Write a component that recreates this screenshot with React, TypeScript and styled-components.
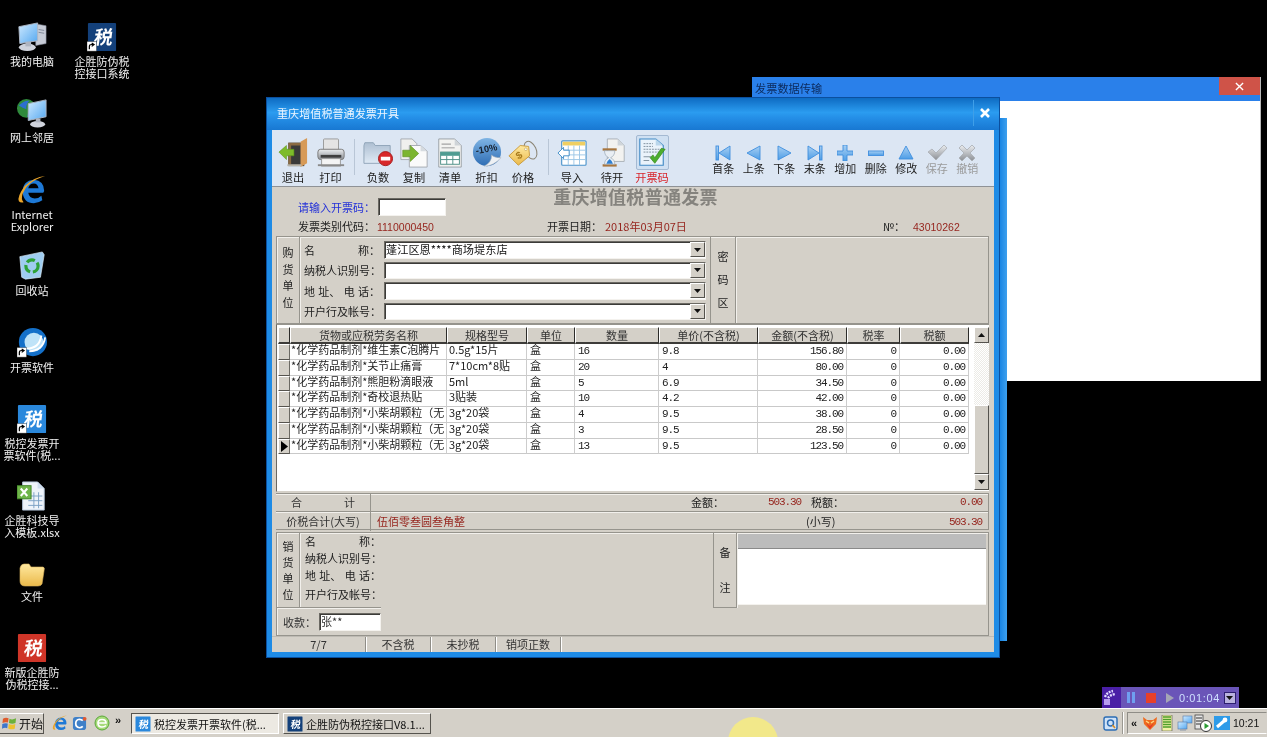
import React from "react";
import styled, { createGlobalStyle, css } from "styled-components";

const CJK = `"Noto Sans CJK SC", "Liberation Sans", sans-serif`;
const GlobalStyle = createGlobalStyle`
  html, body { margin: 0; padding: 0; background: #000; }
  body { font-family: ${CJK}; font-size: 11px; }
`;

const raised = css`
  border: 1px solid;
  border-color: #fff #55534e #55534e #fff;
  background: #d4d0c8;
  box-sizing: border-box;
`;
const sunken = css`
  border: 1px solid;
  border-color: #6b6963 #f4f2ee #f4f2ee #6b6963;
  box-shadow: inset 1px 1px 0 #3c3b38;
  background: #fff;
  box-sizing: border-box;
`;
const etched = css`
  border: 1px solid #96948d;
  box-shadow: inset 1px 1px 0 #f2f0ec;
  box-sizing: border-box;
`;

const Desktop = styled.div`
  width: 1267px;
  height: 737px;
  display: flex;
  flex-direction: column;
  background: #000;
  overflow: hidden;
  position: relative;
  filter: blur(0.3px);
`;
const Canvas = styled.div`
  position: relative;
  flex: 1;
`;
const IconItem = styled.div<{ $x: number; $y: number }>`
  position: absolute;
  left: ${(p) => p.$x}px;
  top: ${(p) => p.$y}px;
  width: 74px;
  display: flex;
  flex-direction: column;
  align-items: center;
  gap: 3px;
  color: #f2f2f2;
  text-align: center;
  line-height: 12px;
  font-size: 11px;
`;
const IconLabel = styled.div`
  white-space: pre-line;
`;

const BackWindow = styled.div`
  position: absolute;
  left: 752px;
  top: 77px;
  width: 509px;
  height: 304px;
  display: flex;
  flex-direction: column;
  background: #fff;
  border-right: 1px solid #b9b9b9;
  box-sizing: border-box;
`;
const BackTitle = styled.div`
  height: 24px;
  flex: none;
  background: #2a80ea;
  color: #0c2a5c;
  display: flex;
  justify-content: space-between;
  padding-left: 3px;
  line-height: 22px;
  font-size: 11.2px;
`;
const BackClose = styled.div`
  width: 41px;
  height: 18px;
  background: #cf5348;
  color: #fff;
  display: flex;
  align-items: center;
  justify-content: center;
`;
const BackStrip = styled.div`
  position: absolute;
  left: 990px;
  top: 118px;
  width: 17px;
  height: 523px;
  background: linear-gradient(90deg, #1a86e4 60%, #3da0ee);
`;

const MainWindow = styled.div`
  position: absolute;
  left: 266px;
  top: 97px;
  width: 734px;
  height: 561px;
  box-sizing: border-box;
  border: 1px solid #0b4f9e;
  padding: 0 5px 5px;
  background: #1e8be6;
  display: flex;
  flex-direction: column;
`;
const TitleBar = styled.div`
  height: 32px;
  flex: none;
  box-sizing: border-box;
  margin: 0 -5px;
  padding: 0 0 2px 10px;
  display: flex;
  align-items: center;
  justify-content: space-between;
  color: #eef6ff;
  font-size: 11.1px;
  background: linear-gradient(180deg, #0e6bc2 0%, #2b9cf0 45%, #2590e8 60%, #1878d2 100%);
`;
const CloseBox = styled.div`
  width: 26px;
  height: 26px;
  box-sizing: border-box;
  padding-right: 4px;
  display: flex;
  align-items: center;
  justify-content: center;
  border-left: 1px solid #3f9fe8;
`;
const Toolbar = styled.div`
  height: 57px;
  flex: none;
  box-sizing: border-box;
  background: #dce6f3;
  border-bottom: 1px solid #8f9296;
  display: flex;
  padding-left: 2px;
`;
const ToolGroup = styled.div<{ $ml?: number; $gap?: number }>`
  display: flex;
  margin-left: ${(p) => p.$ml ?? 0}px;
  gap: ${(p) => p.$gap ?? 0}px;
`;
const ToolSep = styled.div<{ $ml: number }>`
  width: 1px;
  height: 36px;
  margin: 9px 0 0 ${(p) => p.$ml}px;
  background: #b9c6d6;
`;
const ToolButton = styled.div<{ $w: number; $red?: boolean }>`
  width: ${(p) => p.$w}px;
  padding-top: 5px;
  display: flex;
  flex-direction: column;
  align-items: center;
  color: ${(p) => (p.$red ? "#d8262c" : "#222")};
  line-height: 14px;
  font-size: 11.2px;
`;
const ToolIcon = styled.div<{ $active?: boolean }>`
  width: 33px;
  height: 35px;
  box-sizing: border-box;
  display: flex;
  align-items: center;
  justify-content: center;
  border-radius: 2px;
  ${(p) => p.$active && "background:#cfe0f2;border:1px solid #a4b9d2;"}
`;
const NavButton = styled.div<{ $off?: boolean }>`
  width: 30.5px;
  padding-top: 15px;
  display: flex;
  flex-direction: column;
  align-items: center;
  gap: 1px;
  line-height: 13px;
  font-size: 11px;
  color: ${(p) => (p.$off ? "#9a9a9a" : "#222")};
`;
const NavSlot = styled.div`
  height: 16px;
  display: flex;
  align-items: center;
  justify-content: center;
`;

const Body = styled.div`
  flex: 1;
  background: #d4d0c8;
  padding: 0 5px 0 4px;
  display: flex;
  flex-direction: column;
  color: #222;
`;
const HeaderArea = styled.div`
  height: 49px;
  flex: none;
  display: grid;
  grid-template-rows: 31px 18px;
  padding-left: 22px;
  position: relative;
`;
const Heading = styled.div`
  grid-area: 1 / 1;
  justify-self: center;
  margin: 0 0 0 -16px;
  font: 700 18px/18px "Noto Sans CJK SC", serif;
  color: #85837e;
  letter-spacing: 0.3px;
`;
const CodeRow = styled.div`
  grid-area: 1 / 1;
  display: flex;
  align-items: flex-start;
  padding-top: 11px;
  z-index: 1;
`;
const BlueLabel = styled.span`
  color: #2330d8;
  width: 80px;
  line-height: 18px;
`;
const CodeInput = styled.div`
  ${sunken}
  width: 68px;
  height: 18px;
`;
const MetaRow = styled.div`
  grid-area: 2 / 1;
  display: grid;
  grid-template-columns: 249px 336px 1fr;
  line-height: 16px;
`;
const RedText = styled.span`
  color: #96261f;
`;
const Digits = styled.span<{ $red?: boolean }>`
  font-family: "Liberation Mono", monospace;
  font-size: 11px;
  letter-spacing: -1.1px;
  color: ${(p) => (p.$red ? "#96261f" : "#222")};
`;
const PlainDigits = styled(RedText)`
  font-family: "Liberation Sans", sans-serif;
  font-size: 10.5px;
`;
const MetaLabel = styled.span<{ $w?: number }>`
  display: inline-block;
  width: ${(p) => (p.$w ? `${p.$w}px` : "auto")};
`;

const BuyerPanel = styled.div`
  ${etched}
  height: 88px;
  flex: none;
  display: grid;
  grid-template-columns: 23px 1fr 25px 252px;
`;
const SideText = styled.div<{ $gap?: number; $pb?: number }>`
  display: flex;
  flex-direction: column;
  align-items: center;
  justify-content: center;
  gap: ${(p) => p.$gap ?? 5.5}px;
  padding-bottom: ${(p) => p.$pb ?? 0}px;
  line-height: 11px;
  border-right: 1px solid #96948d;
  box-shadow: 1px 0 0 #f2f0ec;
  box-sizing: border-box;
`;
const SellerSide = styled(SideText)`
  width: 23px;
  flex: none;
`;
const FieldList = styled.div`
  padding: 4px 4px 0 4px;
  display: flex;
  flex-direction: column;
  gap: 3px;
  border-right: 1px solid #96948d;
`;
const FieldRow = styled.div`
  display: flex;
  height: 17.5px;
  align-items: center;
`;
const FieldLabel = styled.div`
  width: 80px;
  flex: none;
  padding-right: 4px;
  display: flex;
  justify-content: space-between;
  box-sizing: border-box;
  white-space: nowrap;
`;
const FieldInput = styled.div`
  ${sunken}
  flex: 1;
  height: 100%;
  display: flex;
  align-items: center;
  color: #111;
  line-height: 12px;
  padding: 0 0 0 1px;
  font-size: 11.2px;
`;
const FieldValue = styled.span`
  margin-top: -2px;
`;
const DropButton = styled.div`
  ${raised}
  width: 15px;
  height: 15px;
  flex: none;
  margin-left: auto;
  display: flex;
  align-items: center;
  justify-content: center;
`;

const TablePanel = styled.div`
  height: 168px;
  flex: none;
  box-sizing: border-box;
  display: flex;
  background: #fff;
  padding: 2px 1px 1px 1px;
  border-top: 1px solid #96948d;
  border-left: 1px solid #6b6963;
  border-bottom: 1px solid #d4d0c8;
`;
const GridArea = styled.div`
  width: 692px;
  flex: none;
  box-sizing: border-box;
`;
const COLS = "12px 157px 80px 48px 84px 99px 89px 53px 69px";
const HeadRow = styled.div`
  display: grid;
  grid-template-columns: ${COLS};
  height: 17px;
`;
const HeadCell = styled.div`
  ${raised}
  border-right-color: #2d2c2a;
  border-bottom: 2px solid #3d3c39;
  display: flex;
  align-items: center;
  justify-content: center;
  line-height: 12px;
  color: #333;
  font-size: 11px;
`;
const DataRow = styled.div`
  display: grid;
  grid-template-columns: ${COLS};
  height: 15.75px;
`;
const Indicator = styled.div`
  ${raised}
  border-right-color: #6b6963;
  display: flex;
  align-items: center;
  justify-content: center;
`;
const Cell = styled.div<{ $right?: boolean; $pad?: number }>`
  box-sizing: border-box;
  border-right: 1px solid #cdcdcd;
  border-bottom: 1px solid #c9c9c9;
  white-space: nowrap;
  line-height: 11.5px;
  color: #222;
  text-align: ${(p) => (p.$right ? "right" : "left")};
  padding: 0 ${(p) => (p.$right ? p.$pad ?? 3 : 0)}px 0 ${(p) => (p.$right ? 0 : p.$pad ?? 3)}px;
`;
const Scroll = styled.div`
  width: 15px;
  margin-left: 4px;
  flex: none;
  display: flex;
  flex-direction: column;
  background: repeating-conic-gradient(#fff 0 25%, #ecebe6 0 50%) 0 0 / 2px 2px;
`;
const ScrollBtn = styled.div`
  ${raised}
  height: 16px;
  flex: none;
  display: flex;
  align-items: center;
  justify-content: center;
`;
const ScrollGap = styled.div`
  height: 62px;
  flex: none;
`;
const ScrollThumb = styled.div`
  ${raised}
  flex: 1;
`;

const TotalsPanel = styled.div`
  margin-top: 1px;
  height: 37px;
  flex: none;
  box-sizing: border-box;
  display: flex;
  flex-direction: column;
  border-top: 1px solid #96948d;
  border-bottom: 1px solid #96948d;
  border-right: 1px solid #96948d;
`;
const TotalRow = styled.div<{ $first?: boolean }>`
  flex: 1;
  display: grid;
  grid-template-columns: 95px 320px 77px 43px 1fr;
  align-items: center;
  line-height: 17px;
  ${(p) => p.$first && "border-bottom: 1px solid #96948d;"}
  box-shadow: inset 0 1px 0 #f2f0ec;
`;
const TotalRowWide = styled(TotalRow)`
  grid-template-columns: 95px 435px 1fr auto;
`;
const TotalHead = styled.div<{ $center?: boolean }>`
  height: 100%;
  box-sizing: border-box;
  border-right: 1px solid #96948d;
  display: flex;
  align-items: center;
  justify-content: ${(p) => (p.$center ? "center" : "space-between")};
  padding: ${(p) => (p.$center ? "0" : "0 15px 0 15px")};
  color: #333;
`;
const TotalEnd = styled.div`
  text-align: right;
  padding-right: 6px;
`;
const TaxLine = styled.div`
  display: flex;
  justify-content: space-between;
`;
const TotalText = styled.div<{ $pl?: number }>`
  padding-left: ${(p) => p.$pl ?? 0}px;
`;

const SellerPanel = styled.div`
  ${etched}
  margin-top: 2px;
  height: 104px;
  flex: none;
  display: flex;
  flex-direction: column;
`;
const SellerTop = styled.div`
  height: 75px;
  flex: none;
  display: flex;
`;
const SellerBlock = styled.div`
  width: 104px;
  flex: none;
  display: flex;
  border-bottom: 1px solid #96948d;
  box-shadow: 0 1px 0 #f2f0ec;
`;
const SellerFields = styled.div`
  padding: 0 0 0 5px;
  display: flex;
  flex-direction: column;
  flex: 1;
`;
const SellerRow = styled.div<{ $mt?: number }>`
  width: 76px;
  height: 17px;
  margin-top: ${(p) => p.$mt ?? 0}px;
  line-height: 17px;
  display: flex;
  justify-content: space-between;
  white-space: nowrap;
`;
const SellerGap = styled.div`
  flex: 1;
`;
const RemarkSide = styled(SideText)`
  width: 24px;
  flex: none;
  border-left: 1px solid #96948d;
  border-bottom: 1px solid #96948d;
`;
const RemarkBox = styled.div`
  width: 248px;
  flex: none;
  margin: 1px 2px 3px 1px;
  display: flex;
  flex-direction: column;
`;
const RemarkHead = styled.div`
  height: 14px;
  flex: none;
  background: #bcbcbc;
  border-bottom: 1px solid #8a8a8a;
`;
const RemarkArea = styled.div`
  flex: 1;
  background: #fff;
  border-bottom: 1px solid #f4f2ee;
`;
const PayeeRow = styled.div`
  flex: 1;
  display: flex;
  align-items: center;
  padding: 1px 0 0 6px;
  color: #333;
`;
const PayeeInput = styled.div`
  ${sunken}
  width: 62px;
  height: 18px;
  margin-left: 3px;
  line-height: 14px;
  padding-left: 1px;
`;

const StatusBar = styled.div`
  height: 15px;
  flex: none;
  background: #d4d0c8;
  display: flex;
  line-height: 14px;
  color: #333;
  border-top: 1px solid #bdbab3;
`;
const StatusCell = styled.div<{ $w: number }>`
  width: ${(p) => p.$w}px;
  flex: none;
  box-sizing: border-box;
  text-align: center;
  border-right: 1px solid #8f8d87;
  box-shadow: 1px 0 0 #fff;
`;

const RecorderBar = styled.div`
  position: absolute;
  left: 1102px;
  top: 687px;
  width: 137px;
  height: 21px;
  background: #6a55b8;
  display: flex;
  align-items: center;
  color: #cfe0ff;
  font-size: 11px;
`;
const RecorderLogo = styled.div`
  width: 19px;
  height: 100%;
  flex: none;
  background: #4a1fa6;
  display: flex;
  align-items: center;
  justify-content: center;
`;
const RecorderControls = styled.div`
  display: flex;
  align-items: center;
  gap: 9px;
  margin-left: 5px;
`;
const RecorderTime = styled.span`
  margin-left: 4px;
  font-family: "Liberation Sans", sans-serif;
  letter-spacing: 0.6px;
`;
const RecorderMenu = styled.div`
  width: 12px;
  height: 12px;
  margin-left: 4px;
  background: #b9b2de;
  border: 1px solid #2d1f70;
  box-sizing: border-box;
  display: flex;
  align-items: center;
  justify-content: center;
`;
const CursorGlow = styled.div`
  position: absolute;
  left: 728px;
  top: 717px;
  width: 50px;
  height: 50px;
  border-radius: 50%;
  background: #f2e88a;
  z-index: 2;
`;

const Taskbar = styled.div`
  height: 29px;
  flex: none;
  box-sizing: border-box;
  background: #d4d0c8;
  border-top: 1px solid #fff;
  display: flex;
  align-items: center;
  color: #111;
`;
const StartButton = styled.div`
  ${raised}
  width: 44px;
  height: 21px;
  margin-top: 1px;
  display: flex;
  align-items: center;
  gap: 2px;
  padding-left: 2px;
  font-size: 12px;
  border-left: none;
`;
const QuickLaunch = styled.div`
  display: flex;
  align-items: center;
  margin-left: 8px;
  width: 79px;
`;
const QuickIcon = styled.div<{ $w: number }>`
  width: ${(p) => p.$w}px;
  display: flex;
`;
const Chevrons = styled.span`
  font: 700 11px/12px "Liberation Sans", sans-serif;
  margin: -6px 0 0 0;
`;
const TaskButton = styled.div<{ $on?: boolean }>`
  ${raised}
  width: 148px;
  height: 21px;
  margin: 1px 4px 0 0;
  display: flex;
  align-items: center;
  gap: 3px;
  padding-left: 3px;
  white-space: nowrap;
  font-size: 11px;
  ${(p) =>
    p.$on &&
    css`
      border-color: #55534e #fff #fff #55534e;
      background: #ece9e2;
    `}
`;
const TaskSpacer = styled.div`
  flex: 1;
`;
const TrayOuter = styled.div`
  display: flex;
  align-items: center;
`;
const TrayDivider = styled.div`
  width: 1px;
  height: 22px;
  margin-left: 3px;
  background: #9a9891;
  box-shadow: 1px 0 0 #fff;
`;
const Tray = styled.div`
  width: 140px;
  height: 22px;
  box-sizing: border-box;
  margin-left: 4px;
  border: 1px solid;
  border-color: #8f8d87 transparent #fff #8f8d87;
  display: flex;
  align-items: center;
  padding-left: 3px;
  gap: 1.5px;
`;
const TrayChev = styled(Chevrons)`
  margin: 0;
  width: 9px;
`;
const Clock = styled.span`
  margin-left: 2px;
  font-family: "Liberation Sans", sans-serif;
  font-size: 10.5px;
`;

/* ---------- drawings ---------- */
type SP = { s?: number };
const Svg: React.FC<{ s?: number; v?: number; children: React.ReactNode }> = ({ s = 30, v = 32, children }) => (
  <svg width={s} height={s} viewBox={`0 0 ${v} ${v}`} style={{ display: "block", flex: "none" }}>
    {children}
  </svg>
);
const Defs = () => (
  <svg width="0" height="0" style={{ position: "absolute" }}>
    <defs>
      <linearGradient id="nav" x1="0" y1="0" x2="0" y2="1">
        <stop offset="0" stopColor="#a9d0f3" />
        <stop offset="1" stopColor="#4d9de6" />
      </linearGradient>
      <linearGradient id="gray" x1="0" y1="0" x2="0" y2="1">
        <stop offset="0" stopColor="#eceef0" />
        <stop offset="1" stopColor="#8b8f95" />
      </linearGradient>
      <linearGradient id="folder" x1="0" y1="0" x2="0" y2="1">
        <stop offset="0" stopColor="#aebfd2" />
        <stop offset="1" stopColor="#dfeaf5" />
      </linearGradient>
      <linearGradient id="sky" x1="0" y1="0" x2="0" y2="1">
        <stop offset="0" stopColor="#7fb4e4" />
        <stop offset="1" stopColor="#2e6db4" />
      </linearGradient>
      <linearGradient id="screen" x1="0" y1="0" x2="1" y2="1">
        <stop offset="0" stopColor="#cfeaff" />
        <stop offset="1" stopColor="#55a8f0" />
      </linearGradient>
      <linearGradient id="yellow" x1="0" y1="0" x2="0" y2="1">
        <stop offset="0" stopColor="#ffe9a0" />
        <stop offset="1" stopColor="#eab94a" />
      </linearGradient>
    </defs>
  </svg>
);

const ExitIcon = () => (
  <Svg>
    <rect x="11" y="5" width="17" height="25" fill="#3a3a3a" />
    <polygon points="11,5 24,5 24,8 14,8 14,28 11,28" fill="#8a6a42" />
    <polygon points="24,4 31,0 31,27 24,31" fill="#d79a57" />
    <rect x="10" y="28" width="15" height="2" fill="#b9b4a8" />
    <polygon points="1,15 9,8 9,12 17,12 17,19 9,19 9,23" fill="#7dbb2a" stroke="#5b9118" strokeWidth=".6" />
  </Svg>
);
const PrintIcon = () => (
  <Svg>
    <rect x="8" y="1" width="16" height="12" rx="1" fill="#e4e4e4" stroke="#999" />
    <rect x="2" y="12" width="28" height="11" rx="3" fill="url(#gray)" stroke="#777" />
    <rect x="5" y="18" width="22" height="3" fill="#3f3f3f" />
    <rect x="6" y="22" width="20" height="8" fill="#f4f4f4" stroke="#999" />
    <rect x="2" y="28" width="28" height="2" fill="#8a8a8a" />
  </Svg>
);
const FolderMinusIcon = () => (
  <Svg>
    <path d="M1 8 L2 5 H11 L13 8 H29 V27 H1Z" fill="url(#folder)" stroke="#8fa3b8" />
    <circle cx="24" cy="22" r="7.5" fill="#d8282a" stroke="#a51a1a" />
    <rect x="19" y="20" width="10" height="4" fill="#fff" />
  </Svg>
);
const CopyIcon = () => (
  <Svg>
    <path d="M2 1 H14 L19 6 V23 H2Z" fill="#f0f0ee" stroke="#a5aab0" />
    <path d="M11 8 H23 L30 14 V31 H11Z" fill="#fafafa" stroke="#a5aab0" />
    <polygon points="23,8 23,14 30,14" fill="#d6dbe0" />
    <polygon points="4,13 12,13 12,8 21,16.5 12,25 12,20 4,20" fill="#7cb52f" stroke="#568a16" strokeWidth=".6" />
  </Svg>
);
const ListIcon = () => (
  <Svg>
    <path d="M4 1 H21 L28 8 V31 H4Z" fill="#f2f2f0" stroke="#9aa0a6" />
    <polygon points="21,1 21,8 28,8" fill="#cfd4d8" />
    <rect x="7" y="6" width="10" height="1" fill="#888" />
    <rect x="7" y="10" width="14" height="1" fill="#999" />
    <rect x="6" y="15" width="20" height="13" fill="#fff" stroke="#4d8f86" />
    <rect x="6" y="15" width="20" height="4" fill="#4f9c92" />
    <path d="M6 23 H26 M12.5 19 V28 M19 19 V28" stroke="#4d8f86" strokeWidth="1" />
  </Svg>
);
const DiscountIcon = () => (
  <Svg>
    <circle cx="16" cy="15" r="15" fill="url(#sky)" />
    <path d="M13 30 Q23 30 31 21 Q23 21 21 18 Q21 26 13 30Z" fill="#eef1f4" stroke="#a9b2bb" strokeWidth=".6" />
    <text x="16" y="15" textAnchor="middle" fontSize="10" fontWeight="700" fill="#17202c" fontFamily="Liberation Sans" transform="rotate(-10 16 15)">
      -10%
    </text>
  </Svg>
);
const TagIcon = () => (
  <Svg>
    <ellipse cx="24" cy="13" rx="6" ry="10" fill="none" stroke="#8b8575" strokeWidth="1.1" transform="rotate(-25 24 13)" />
    <polygon points="1,19 13,8 22,9 23,19 11,29" fill="url(#yellow)" stroke="#c79a3e" />
    <circle cx="19" cy="12" r="1.4" fill="#fff" stroke="#a8852e" strokeWidth=".5" />
    <text x="12" y="22" textAnchor="middle" fontSize="11" fontWeight="700" fill="#a87b1d" fontFamily="Liberation Sans" transform="rotate(-30 12 19)">
      $
    </text>
  </Svg>
);
const ImportIcon = () => (
  <Svg>
    <rect x="5" y="3" width="26" height="26" rx="1" fill="#fff" stroke="#4a93cb" strokeWidth="1.2" />
    <rect x="6" y="4" width="24" height="4" fill="#efcf62" />
    <path d="M6 13 H30 M6 18 H30 M6 23 H30 M12 8 V29 M18 8 V29 M24 8 V29" stroke="#9cc6e6" strokeWidth="1" />
    <polygon points="1,16 7,10 7,13 13,13 13,19 7,19 7,22" fill="#fff" stroke="#3d8cc8" />
  </Svg>
);
const PendingIcon = () => (
  <Svg>
    <path d="M11 1 H22 L29 8 V25 H11Z" fill="#f2f2f0" stroke="#aab0b6" />
    <polygon points="22,1 22,8 29,8" fill="#cfd5da" />
    <rect x="6" y="11" width="15" height="2.5" fill="#a8763e" />
    <rect x="6" y="28" width="15" height="2.5" fill="#a8763e" />
    <path d="M8 13.5 H19 Q19 19 14.5 21 Q19 23 19 28 H8 Q8 23 12.5 21 Q8 19 8 13.5Z" fill="#e9eef3" stroke="#8a9aa8" strokeWidth=".6" />
    <path d="M10 27.5 H17 Q16 24 13.5 22.5 Q11 24 10 27.5Z" fill="#2f7fd1" />
  </Svg>
);
const CodeIcon = () => (
  <Svg>
    <path d="M3 1 H20 L28 8 V29 H3Z" fill="#eaf3fb" stroke="#3f88c4" strokeWidth="1.2" />
    <polygon points="20,1 20,8 28,8" fill="#b9d6ec" />
    <path d="M7 6 H17 M7 9 H17 M7 12 H24 M7 15 H24" stroke="#7d8e9c" strokeWidth="1" strokeDasharray="2 1" />
    <path d="M7 20 H15 M7 24 H13" stroke="#7d8e9c" strokeWidth="1" />
    <path d="M14 21 L19 27 L30 12 L26 11 L19 21 L17 18Z" fill="#4cae2e" stroke="#2f8419" strokeWidth=".7" />
  </Svg>
);

const navProps = { fill: "url(#nav)", stroke: "#3f8ede", strokeWidth: 0.9 };
const NavFirst = () => (
  <Svg s={16} v={16}>
    <rect x="1" y="1" width="2.5" height="14" {...navProps} />
    <polygon points="15,1 15,15 4,8" {...navProps} />
  </Svg>
);
const NavPrev = () => (
  <Svg s={16} v={16}>
    <polygon points="14,1 14,15 1,8" {...navProps} />
  </Svg>
);
const NavNext = () => (
  <Svg s={16} v={16}>
    <polygon points="2,1 2,15 15,8" {...navProps} />
  </Svg>
);
const NavLast = () => (
  <Svg s={16} v={16}>
    <polygon points="1,1 1,15 12,8" {...navProps} />
    <rect x="12.5" y="1" width="2.5" height="14" {...navProps} />
  </Svg>
);
const NavPlus = () => (
  <Svg s={16} v={16}>
    <polygon points="6,0 10,0 10,6 16,6 16,10 10,10 10,16 6,16 6,10 0,10 0,6 6,6" {...navProps} />
  </Svg>
);
const NavMinus = () => (
  <Svg s={16} v={16}>
    <rect x="0.5" y="6" width="15" height="4.5" {...navProps} />
  </Svg>
);
const NavEdit = () => (
  <Svg s={16} v={16}>
    <polygon points="8,1 15,14 1,14" {...navProps} />
  </Svg>
);
const grayProps = { fill: "url(#gray)", stroke: "#a9adb2", strokeWidth: 0.8 };
const NavSave = () => (
  <Svg s={20} v={20}>
    <polygon points="1,9 5,6 9,10 17,2 20,5 9,17" {...grayProps} />
  </Svg>
);
const NavCancel = () => (
  <Svg s={18} v={18}>
    <polygon points="4,1 9,6 14,1 17,4 12,9 17,14 14,17 9,12 4,17 1,14 6,9 1,4" {...grayProps} />
  </Svg>
);
const Arrow: React.FC<{ up?: boolean }> = ({ up }) => (
  <svg width="7" height="4" viewBox="0 0 7 4" style={{ display: "block" }}>
    <polygon points={up ? "0,4 7,4 3.5,0" : "0,0 7,0 3.5,4"} fill="#111" />
  </svg>
);
const RowPointer = () => (
  <svg width="7" height="11" viewBox="0 0 7 11" style={{ display: "block" }}>
    <polygon points="0,0 7,5.5 0,11" fill="#000" />
  </svg>
);
const CloseX: React.FC<{ size: number; w: number }> = ({ size, w }) => (
  <svg width={size} height={size} viewBox="0 0 10 10" style={{ display: "block" }}>
    <path d="M1 1 L9 9 M9 1 L1 9" stroke="#fff" strokeWidth={w} />
  </svg>
);

const Shortcut = () => (
  <g>
    <rect x="0" y="21" width="10" height="10" fill="#fff" stroke="#555" strokeWidth=".5" />
    <path d="M2.5 29 V26 Q2.5 24 5 24 H7 M5 22.5 L7.5 24 L5 26" fill="none" stroke="#000" strokeWidth="1.3" />
  </g>
);
const LogoTile: React.FC<{ bg: string; color?: string; arrow?: boolean; s?: number }> = ({ bg, color = "#fff", arrow, s = 30 }) => (
  <Svg s={s}>
    <rect x="1" y="1" width="30" height="30" fill={bg} rx="1" />
    <text x="20" y="24" textAnchor="middle" fontSize="20" fontWeight="700" fill={color} fontFamily="Noto Sans CJK SC" transform="skewX(-8)">
      税
    </text>
    {arrow && <Shortcut />}
  </Svg>
);
const ComputerIcon = () => (
  <Svg>
    <polygon points="20,2 31,4 31,23 20,25" fill="#c6cbd6" stroke="#8c93a3" strokeWidth=".6" />
    <path d="M23 8 L29 9 M23 11 L29 12" stroke="#7e8696" />
    <polygon points="2,5 22,1 22,20 3,23" fill="url(#screen)" stroke="#aeb6c4" />
    <ellipse cx="11" cy="27" rx="9" ry="4" fill="#cfd3dc" />
    <rect x="9" y="21" width="6" height="5" fill="#aeb4c0" />
  </Svg>
);
const NetworkIcon = () => (
  <Svg>
    <circle cx="10" cy="11" r="10" fill="#2f8a3c" />
    <path d="M2 8 Q8 2 13 3 Q9 8 10 12 Q5 10 2 8Z" fill="#2d6fd0" />
    <path d="M12 15 Q18 13 19 17 Q15 21 11 20Z" fill="#2d6fd0" />
    <polygon points="12,6 31,2 31,20 12,24" fill="url(#screen)" stroke="#aeb6c4" />
    <ellipse cx="22" cy="28" rx="8" ry="3.5" fill="#cfd3dc" />
    <rect x="20" y="22" width="5" height="4" fill="#aeb4c0" />
  </Svg>
);
const IEIcon: React.FC<SP> = ({ s = 30 }) => (
  <Svg s={s}>
    <path
      d="M28 19 H12 Q13 25 19 25 Q23 25 26 22 L27 27 Q23 30 18 30 Q7 30 6 18 Q6 6 18 5 Q29 6 29 17Z M12 14 H23 Q22 9 18 9 Q13 9 12 14Z"
      fillRule="evenodd"
      fill="#1e79d6"
    />
    <path d="M2 28 Q0 23 8 12 Q18 2 30 1 Q26 2 20 5 Q10 10 6 20 Q4 26 7 29 Q4 30 2 28Z" fill="#eaa52a" />
  </Svg>
);
const BinIcon = () => (
  <Svg>
    <polygon points="3,6 27,1 29,4 25,28 9,30 5,28" fill="#9fcdf0" stroke="#dff0fc" strokeWidth=".7" />
    <circle cx="16" cy="16" r="6.5" fill="none" stroke="#2da238" strokeWidth="3.4" strokeDasharray="9 3" />
  </Svg>
);
const InvoiceAppIcon = () => (
  <Svg>
    <circle cx="17" cy="15" r="15" fill="#1470c9" />
    <circle cx="18" cy="15" r="10" fill="#bfe3f8" />
    <path d="M10 22 Q24 22 26 8 M13 25 Q28 24 30 10" stroke="#fff" strokeWidth="2" fill="none" />
    <Shortcut />
  </Svg>
);
const ExcelIcon = () => (
  <Svg>
    <path d="M6 1 H22 L29 8 V31 H6Z" fill="#eef3fa" stroke="#b6c8dc" />
    <polygon points="22,1 22,8 29,8" fill="#cfdded" />
    <path d="M12 16 H27 M12 21 H27 M12 26 H27 M18 12 V29 M23 12 V29" stroke="#7aa0c4" />
    <rect x="0" y="5" width="15" height="14" fill="#6fb54a" stroke="#3e8226" />
    <path d="M4 8 L11 16 M11 8 L4 16" stroke="#fff" strokeWidth="2.2" />
  </Svg>
);
const FolderIcon = () => (
  <Svg s={26} v={26}>
    <path d="M1 7 Q2 3 5 3 H10 L12 6 H24 Q26 6 25 10 L23 23 Q22 25 19 25 H6 Q1 25 1 20Z" fill="url(#yellow)" stroke="#d8b25c" strokeWidth=".6" />
  </Svg>
);
const StartFlag = () => (
  <Svg s={15} v={16}>
    <path d="M1 3 Q4 1 7 2.5 L6.4 7 Q3.5 6 0.5 7.5Z" fill="#df5b2c" />
    <path d="M8 3 Q11 4.5 15 2.5 L14.4 7.5 Q11 9 7.4 7.5Z" fill="#6bb13a" />
    <path d="M0.3 8.5 Q3.5 7 6.2 8 L5.6 13 Q3 12 0 13.5Z" fill="#3d77cc" />
    <path d="M7.2 8.6 Q11 10 14.2 8.6 L13.6 13.5 Q10 15 6.6 13.3Z" fill="#edc12f" />
  </Svg>
);
const ToolboxIcon = () => (
  <Svg s={16} v={16}>
    <rect x="1" y="2" width="13" height="13" rx="2" fill="#cfe2f7" stroke="#2b6cb4" strokeWidth="1.4" />
    <circle cx="7.5" cy="8" r="3" fill="none" stroke="#2b6cb4" strokeWidth="1.5" />
    <path d="M9.5 10 L12 13" stroke="#d98a1f" strokeWidth="1.6" />
  </Svg>
);
const FoxIcon = () => (
  <Svg s={16} v={16}>
    <path d="M1 2 L5 5 H11 L15 2 L14 9 L8 15 L2 9Z" fill="#ee6b20" />
    <path d="M4 8 L8 11 L12 8 L8 14Z" fill="#e23a2c" />
    <path d="M4 6 L7 8 M12 6 L9 8" stroke="#ffd880" strokeWidth="1.3" />
  </Svg>
);
const BarsIcon = () => (
  <Svg s={16} v={16}>
    <rect x="3" y="0" width="10" height="16" fill="#f2f2a6" stroke="#333" strokeWidth=".5" />
    <path d="M4 2 H12 M4 4.5 H12 M4 7 H12 M4 9.5 H12 M4 12 H12" stroke="#4e9f2a" strokeWidth="1.6" />
  </Svg>
);
const NetTrayIcon = () => (
  <Svg s={16} v={16}>
    <rect x="6" y="1" width="9" height="7" fill="url(#screen)" stroke="#5177a8" strokeWidth=".6" />
    <rect x="1" y="7" width="9" height="7" fill="url(#screen)" stroke="#5177a8" strokeWidth=".6" />
    <path d="M3 15 H9" stroke="#8a97aa" />
  </Svg>
);
const ServerIcon = () => (
  <Svg s={18} v={18}>
    <rect x="1" y="1" width="8" height="14" fill="#e6e6e6" stroke="#444" strokeWidth=".8" />
    <path d="M2 4 H8 M2 7 H8 M2 10 H8" stroke="#333" />
    <circle cx="12" cy="12" r="5.5" fill="#fff" stroke="#333" />
    <polygon points="10.5,9 15,12 10.5,15" fill="#2a9c33" />
  </Svg>
);
const WrenchIcon = () => (
  <Svg s={16} v={16}>
    <rect x="0" y="1" width="16" height="14" fill="#2e9be8" />
    <path d="M3 12 L10 6" stroke="#fff" strokeWidth="3" />
    <circle cx="11" cy="5" r="2.4" fill="#fff" />
  </Svg>
);
const SmallIE = () => <IEIcon s={16} />;
const QuickPage = () => (
  <Svg s={15} v={16}>
    <rect x="1" y="1" width="14" height="14" rx="3" fill="#3f80c8" />
    <path d="M11.5 5 Q10 3.5 8 3.5 Q4 4 4 8 Q4 12 8 12.5 Q10 12.5 11.5 11" fill="none" stroke="#fff" strokeWidth="1.8" />
    <circle cx="13.5" cy="3" r="2" fill="#e4572e" />
  </Svg>
);
const QuickGreen = () => (
  <Svg s={16} v={16}>
    <circle cx="8" cy="8" r="7" fill="#a6da7a" stroke="#5aa83a" />
    <path d="M4 8 H12 Q12 4.5 8 4.5 Q4 4.5 4 8 Q4 12 8 12 Q10.5 12 12 10.5" fill="none" stroke="#fff" strokeWidth="1.7" />
  </Svg>
);
const RecLogo = () => (
  <Svg s={17} v={17}>
    <path d="M1 16 V10 H7 V16Z" fill="#b79cf0" />
    <path d="M2 8 Q4 3 10 2 M5 9 Q7 6 12 5" stroke="#e0d8ff" strokeWidth="2.4" strokeDasharray="2 1" fill="none" />
  </Svg>
);

/* ---------- data ---------- */
const iconsOnDesktop: { x: number; y: number; icon: React.ReactNode; label: string }[] = [
  { x: -5, y: 22, icon: <ComputerIcon />, label: "我的电脑" },
  { x: 65, y: 22, icon: <LogoTile bg="#13407a" arrow />, label: "企胜防伪税\n控接口系统" },
  { x: -5, y: 98, icon: <NetworkIcon />, label: "网上邻居" },
  { x: -5, y: 175, icon: <IEIcon />, label: "Internet\nExplorer" },
  { x: -5, y: 251, icon: <BinIcon />, label: "回收站" },
  { x: -5, y: 328, icon: <InvoiceAppIcon />, label: "开票软件" },
  { x: -5, y: 404, icon: <LogoTile bg="#2a88dc" arrow />, label: "税控发票开\n票软件(税..." },
  { x: -5, y: 481, icon: <ExcelIcon />, label: "企胜科技导\n入模板.xlsx" },
  { x: -5, y: 561, icon: <FolderIcon />, label: "文件" },
  { x: -5, y: 633, icon: <LogoTile bg="#cf3528" />, label: "新版企胜防\n伪税控接..." },
];
const columns = ["", "货物或应税劳务名称", "规格型号", "单位", "数量", "单价(不含税)", "金额(不含税)", "税率", "税额"];
const rows = [
  ["*化学药品制剂*维生素C泡腾片", "0.5g*15片", "16", "9.8", "156.80"],
  ["*化学药品制剂*关节止痛膏", "7*10cm*8贴", "20", "4", "80.00"],
  ["*化学药品制剂*熊胆粉滴眼液", "5ml", "5", "6.9", "34.50"],
  ["*化学药品制剂*奇校退热贴", "3贴装", "10", "4.2", "42.00"],
  ["*化学药品制剂*小柴胡颗粒（无", "3g*20袋", "4", "9.5", "38.00"],
  ["*化学药品制剂*小柴胡颗粒（无", "3g*20袋", "3", "9.5", "28.50"],
  ["*化学药品制剂*小柴胡颗粒（无", "3g*20袋", "13", "9.5", "123.50"],
];
const Spaced: React.FC<{ parts: string[] }> = ({ parts }) => (
  <>
    {parts.map((p) => (
      <span key={p}>{p}</span>
    ))}
  </>
);
const buyerFields: { parts: string[]; value?: string }[] = [
  { parts: ["名", "称："], value: "蓬江区恩****商场堤东店" },
  { parts: ["纳税人识别号："] },
  { parts: ["地", "址、", "电", "话："] },
  { parts: ["开户行及帐号："] },
];

export default function App() {
  return (
    <>
      <GlobalStyle />
      <Defs />
      <Desktop>
        <Canvas>
          {iconsOnDesktop.map((d) => (
            <IconItem key={d.label} $x={d.x} $y={d.y}>
              {d.icon}
              <IconLabel>{d.label}</IconLabel>
            </IconItem>
          ))}
          <BackWindow>
            <BackTitle>
              发票数据传输
              <BackClose>
                <CloseX size={9} w={1.5} />
              </BackClose>
            </BackTitle>
          </BackWindow>
          <BackStrip />
          <MainWindow>
            <TitleBar>
              重庆增值税普通发票开具
              <CloseBox>
                <CloseX size={10} w={2.6} />
              </CloseBox>
            </TitleBar>
            <Toolbar>
              <ToolGroup>
                <ToolButton $w={38}><ToolIcon><ExitIcon /></ToolIcon>退出</ToolButton>
                <ToolButton $w={37}><ToolIcon><PrintIcon /></ToolIcon>打印</ToolButton>
              </ToolGroup>
              <ToolSep $ml={5} />
              <ToolGroup $ml={5}>
                <ToolButton $w={36}><ToolIcon><FolderMinusIcon /></ToolIcon>负数</ToolButton>
                <ToolButton $w={36}><ToolIcon><CopyIcon /></ToolIcon>复制</ToolButton>
                <ToolButton $w={36}><ToolIcon><ListIcon /></ToolIcon>清单</ToolButton>
                <ToolButton $w={37}><ToolIcon><DiscountIcon /></ToolIcon>折扣</ToolButton>
                <ToolButton $w={36}><ToolIcon><TagIcon /></ToolIcon>价格</ToolButton>
              </ToolGroup>
              <ToolSep $ml={7} />
              <ToolGroup $ml={5} $gap={4}>
                <ToolButton $w={36}><ToolIcon><ImportIcon /></ToolIcon>导入</ToolButton>
                <ToolButton $w={36}><ToolIcon><PendingIcon /></ToolIcon>待开</ToolButton>
                <ToolButton $w={36} $red><ToolIcon $active><CodeIcon /></ToolIcon>开票码</ToolButton>
              </ToolGroup>
              <ToolGroup $ml={38}>
                <NavButton><NavSlot><NavFirst /></NavSlot>首条</NavButton>
                <NavButton><NavSlot><NavPrev /></NavSlot>上条</NavButton>
                <NavButton><NavSlot><NavNext /></NavSlot>下条</NavButton>
                <NavButton><NavSlot><NavLast /></NavSlot>末条</NavButton>
                <NavButton><NavSlot><NavPlus /></NavSlot>增加</NavButton>
                <NavButton><NavSlot><NavMinus /></NavSlot>删除</NavButton>
                <NavButton><NavSlot><NavEdit /></NavSlot>修改</NavButton>
                <NavButton $off><NavSlot><NavSave /></NavSlot>保存</NavButton>
                <NavButton $off><NavSlot><NavCancel /></NavSlot>撤销</NavButton>
              </ToolGroup>
            </Toolbar>
            <Body>
              <HeaderArea>
                <Heading>重庆增值税普通发票</Heading>
                <CodeRow>
                  <BlueLabel>请输入开票码：</BlueLabel>
                  <CodeInput />
                </CodeRow>
                <MetaRow>
                  <span>
                    <MetaLabel $w={79}>发票类别代码：</MetaLabel>
                    <PlainDigits>1110000450</PlainDigits>
                  </span>
                  <span>
                    <MetaLabel $w={58}>开票日期：</MetaLabel>
                    <RedText>2018年03月07日</RedText>
                  </span>
                  <span>
                    <MetaLabel $w={30}>№：</MetaLabel>
                    <PlainDigits>43010262</PlainDigits>
                  </span>
                </MetaRow>
              </HeaderArea>
              <BuyerPanel>
                <SideText $pb={5}>
                  <span>购</span><span>货</span><span>单</span><span>位</span>
                </SideText>
                <FieldList>
                  {buyerFields.map((f) => (
                    <FieldRow key={f.parts.join("")}>
                      <FieldLabel>
                        <Spaced parts={f.parts} />
                      </FieldLabel>
                      <FieldInput>
                        {f.value && <FieldValue>{f.value}</FieldValue>}
                        <DropButton><Arrow /></DropButton>
                      </FieldInput>
                    </FieldRow>
                  ))}
                </FieldList>
                <SideText $gap={12} $pb={2}>
                  <span>密</span><span>码</span><span>区</span>
                </SideText>
                <div />
              </BuyerPanel>
              <TablePanel>
                <GridArea>
                  <HeadRow>
                    {columns.map((c, i) => (
                      <HeadCell key={i}>{c}</HeadCell>
                    ))}
                  </HeadRow>
                  {rows.map((r, i) => (
                    <DataRow key={i}>
                      <Indicator>{i === rows.length - 1 && <RowPointer />}</Indicator>
                      <Cell $pad={1}>{r[0]}</Cell>
                      <Cell $pad={2}>{r[1]}</Cell>
                      <Cell>盒</Cell>
                      <Cell><Digits>{r[2]}</Digits></Cell>
                      <Cell><Digits>{r[3]}</Digits></Cell>
                      <Cell $right><Digits>{r[4]}</Digits></Cell>
                      <Cell $right $pad={3}><Digits>0</Digits></Cell>
                      <Cell $right><Digits>0.00</Digits></Cell>
                    </DataRow>
                  ))}
                </GridArea>
                <Scroll>
                  <ScrollBtn><Arrow up /></ScrollBtn>
                  <ScrollGap />
                  <ScrollThumb />
                  <ScrollBtn><Arrow /></ScrollBtn>
                </Scroll>
              </TablePanel>
              <TotalsPanel>
                <TotalRow $first>
                  <TotalHead>
                    <span>合</span><span>计</span>
                  </TotalHead>
                  <span />
                  <span>金额：</span>
                  <Digits $red>503.30</Digits>
                  <TotalEnd>
                    <TaxLine>
                      <span>税额：</span>
                      <Digits $red>0.00</Digits>
                    </TaxLine>
                  </TotalEnd>
                </TotalRow>
                <TotalRowWide>
                  <TotalHead $center>价税合计(大写)</TotalHead>
                  <TotalText $pl={6}><RedText>伍佰零叁圆叁角整</RedText></TotalText>
                  <span>(小写)</span>
                  <TotalEnd><Digits $red>503.30</Digits></TotalEnd>
                </TotalRowWide>
              </TotalsPanel>
              <SellerPanel>
                <SellerTop>
                  <SellerBlock>
                    <SellerSide $gap={5}>
                      <span>销</span><span>货</span><span>单</span><span>位</span>
                    </SellerSide>
                    <SellerFields>
                      <SellerRow><Spaced parts={["名", "称："]} /></SellerRow>
                      <SellerRow><Spaced parts={["纳税人识别号："]} /></SellerRow>
                      <SellerRow><Spaced parts={["地", "址、", "电", "话："]} /></SellerRow>
                      <SellerRow $mt={2}><Spaced parts={["开户行及帐号："]} /></SellerRow>
                    </SellerFields>
                  </SellerBlock>
                  <SellerGap />
                  <RemarkSide $gap={24}>
                    <span>备</span><span>注</span>
                  </RemarkSide>
                  <RemarkBox>
                    <RemarkHead />
                    <RemarkArea />
                  </RemarkBox>
                </SellerTop>
                <PayeeRow>
                  收款：
                  <PayeeInput>张**</PayeeInput>
                </PayeeRow>
              </SellerPanel>
            </Body>
            <StatusBar>
              <StatusCell $w={94}>7/7</StatusCell>
              <StatusCell $w={65}>不含税</StatusCell>
              <StatusCell $w={65}>未抄税</StatusCell>
              <StatusCell $w={65}>销项正数</StatusCell>
            </StatusBar>
          </MainWindow>
        </Canvas>
        <RecorderBar>
          <RecorderLogo><RecLogo /></RecorderLogo>
          <RecorderControls>
            <Svg s={11} v={11}>
              <rect x="1" y="0" width="3" height="11" fill="#6f9ff0" />
              <rect x="6" y="0" width="3" height="11" fill="#6f9ff0" />
            </Svg>
            <Svg s={10} v={10}>
              <rect width="10" height="10" fill="#e8402a" />
            </Svg>
            <Svg s={10} v={10}>
              <polygon points="1,0 9,5 1,10" fill="#a5a5b5" />
            </Svg>
          </RecorderControls>
          <RecorderTime>0:01:04</RecorderTime>
          <RecorderMenu><Arrow /></RecorderMenu>
        </RecorderBar>
        <CursorGlow />
        <Taskbar>
          <StartButton><StartFlag />开始</StartButton>
          <QuickLaunch>
            <QuickIcon $w={20}><SmallIE /></QuickIcon>
            <QuickIcon $w={22}><QuickPage /></QuickIcon>
            <QuickIcon $w={21}><QuickGreen /></QuickIcon>
            <Chevrons>»</Chevrons>
          </QuickLaunch>
          <TaskButton $on><LogoTile bg="#2a88dc" s={16} />税控发票开票软件(税...</TaskButton>
          <TaskButton><LogoTile bg="#13407a" s={16} />企胜防伪税控接口V8.1...</TaskButton>
          <TaskSpacer />
          <TrayOuter>
            <ToolboxIcon />
            <TrayDivider />
            <Tray>
              <TrayChev>«</TrayChev>
              <FoxIcon />
              <BarsIcon />
              <NetTrayIcon />
              <ServerIcon />
              <WrenchIcon />
              <Clock>10:21</Clock>
            </Tray>
          </TrayOuter>
        </Taskbar>
      </Desktop>
    </>
  );
}
